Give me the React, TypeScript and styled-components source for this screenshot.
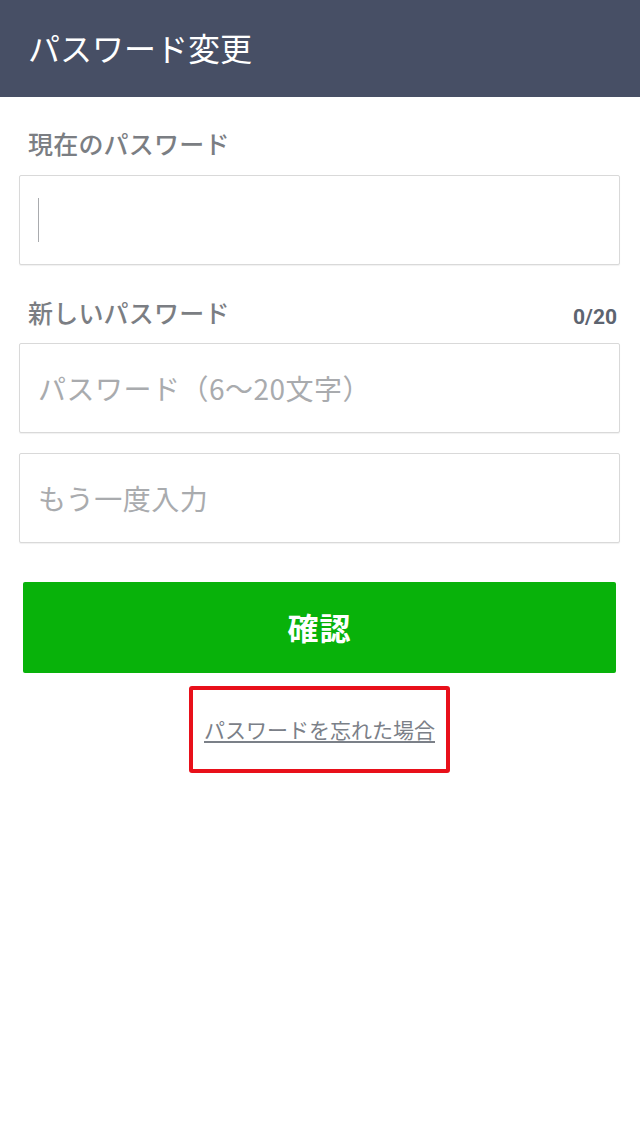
import React from "react";
import styled, { createGlobalStyle } from "styled-components";

const Global = createGlobalStyle`
  html, body { margin: 0; padding: 0; background: #ffffff; }
  body { font-family: "Noto Sans CJK JP", "Noto Sans", sans-serif; }
  * { box-sizing: border-box; }
`;

const Page = styled.div`
  width: 640px;
  min-height: 1148px;
  background: #ffffff;
`;

const Header = styled.header`
  height: 97px;
  background: #474f65;
  display: flex;
  align-items: center;
  padding: 0 0 4px 28px;
`;

const Title = styled.h1`
  margin: 0;
  color: #ffffff;
  font-size: 32px;
  font-weight: 400;
  letter-spacing: 0;
`;

const Content = styled.main`
  display: flex;
  flex-direction: column;
  padding: 0 20px 0 19px;
`;

const LabelRow = styled.div<{ $top: number }>`
  display: flex;
  justify-content: space-between;
  align-items: center;
  height: 36px;
  margin-top: ${(p) => p.$top}px;
  padding: 0 3px 0 9px;
`;

const Label = styled.span`
  font-size: 25px;
  color: #7b7e83;
  font-weight: 500;
  letter-spacing: 0.2px;
`;

const Counter = styled.span`
  font-family: "Roboto", "Noto Sans", sans-serif;
  font-size: 21px;
  font-weight: 700;
  color: #5d6470;
  padding-top: 10px;
`;

const Field = styled.label<{ $top: number }>`
  display: flex;
  align-items: center;
  height: 90px;
  margin-top: ${(p) => p.$top}px;
  padding: 0 18px;
  border: 1px solid #d9d9d9;
  border-radius: 2px;
  box-shadow: 0 1px 1px rgba(0, 0, 0, 0.06);
  background: #ffffff;
`;

const Caret = styled.span`
  width: 1px;
  height: 44px;
  background: #a9abae;
`;

const Input = styled.input`
  flex: 1;
  border: none;
  outline: none;
  background: transparent;
  font-family: "Noto Sans CJK JP", "Noto Sans", sans-serif;
  font-size: 28px;
  color: #333;
  padding: 0;
  letter-spacing: 0.5px;
  &::placeholder { color: #a9abae; }
`;

const Button = styled.button`
  margin: 39px 4px 0 4px;
  height: 91px;
  border: none;
  border-radius: 2px;
  background: #08b20a;
  color: #ffffff;
  font-family: "Noto Sans CJK JP", "Noto Sans", sans-serif;
  font-size: 31px;
  font-weight: 700;
  letter-spacing: 1px;
  padding-bottom: 4px;
`;

const Highlight = styled.div`
  align-self: center;
  margin-top: 13px;
  width: 261px;
  height: 87px;
  border: 4px solid #e8101a;
  border-radius: 3px;
  display: flex;
  align-items: center;
  justify-content: center;
  padding-bottom: 2px;
`;

const ForgotLink = styled.a`
  font-size: 21px;
  color: #7b8088;
  text-decoration: underline;
  text-underline-offset: 3px;
  letter-spacing: 0;
`;

export default function App() {
  return (
    <Page>
      <Global />
      <Header>
        <Title>パスワード変更</Title>
      </Header>
      <Content>
        <LabelRow $top={28}>
          <Label>現在のパスワード</Label>
        </LabelRow>
        <Field $top={14}>
          <Caret />
          <Input type="password" />
        </Field>
        <LabelRow $top={29}>
          <Label>新しいパスワード</Label>
          <Counter>0/20</Counter>
        </LabelRow>
        <Field $top={13}>
          <Input type="password" placeholder="パスワード（6〜20文字）" />
        </Field>
        <Field $top={20}>
          <Input type="password" placeholder="もう一度入力" />
        </Field>
        <Button>確認</Button>
        <Highlight>
          <ForgotLink>パスワードを忘れた場合</ForgotLink>
        </Highlight>
      </Content>
    </Page>
  );
}
